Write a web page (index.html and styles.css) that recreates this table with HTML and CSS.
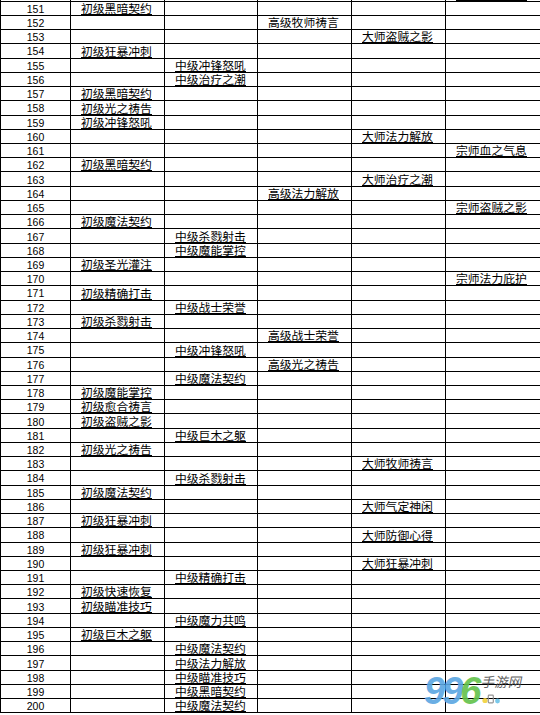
FILE: index.html
```html
<!DOCTYPE html>
<html lang="zh">
<head>
<meta charset="utf-8">
<title>技能表</title>
<link rel="stylesheet" href="styles.css">
</head>
<body>
<div class="page">
<div class="sheet">
<div class="c n"></div><div class="c"></div><div class="c"></div><div class="c"></div><div class="c"></div><div class="c"><span>宗师光之祷告</span></div>
<div class="c n">151</div><div class="c"><span>初级黑暗契约</span></div><div class="c"></div><div class="c"></div><div class="c"></div><div class="c"></div>
<div class="c n">152</div><div class="c"></div><div class="c"></div><div class="c"><span class="plain">高级牧师祷言</span></div><div class="c"></div><div class="c"></div>
<div class="c n">153</div><div class="c"></div><div class="c"></div><div class="c"></div><div class="c"><span>大师盗贼之影</span></div><div class="c"></div>
<div class="c n">154</div><div class="c"><span>初级狂暴冲刺</span></div><div class="c"></div><div class="c"></div><div class="c"></div><div class="c"></div>
<div class="c n">155</div><div class="c"></div><div class="c"><span>中级冲锋怒吼</span></div><div class="c"></div><div class="c"></div><div class="c"></div>
<div class="c n">156</div><div class="c"></div><div class="c"><span>中级治疗之潮</span></div><div class="c"></div><div class="c"></div><div class="c"></div>
<div class="c n">157</div><div class="c"><span>初级黑暗契约</span></div><div class="c"></div><div class="c"></div><div class="c"></div><div class="c"></div>
<div class="c n">158</div><div class="c"><span>初级光之祷告</span></div><div class="c"></div><div class="c"></div><div class="c"></div><div class="c"></div>
<div class="c n">159</div><div class="c"><span>初级冲锋怒吼</span></div><div class="c"></div><div class="c"></div><div class="c"></div><div class="c"></div>
<div class="c n">160</div><div class="c"></div><div class="c"></div><div class="c"></div><div class="c"><span>大师法力解放</span></div><div class="c"></div>
<div class="c n">161</div><div class="c"></div><div class="c"></div><div class="c"></div><div class="c"></div><div class="c"><span>宗师血之气息</span></div>
<div class="c n">162</div><div class="c"><span>初级黑暗契约</span></div><div class="c"></div><div class="c"></div><div class="c"></div><div class="c"></div>
<div class="c n">163</div><div class="c"></div><div class="c"></div><div class="c"></div><div class="c"><span>大师治疗之潮</span></div><div class="c"></div>
<div class="c n">164</div><div class="c"></div><div class="c"></div><div class="c"><span>高级法力解放</span></div><div class="c"></div><div class="c"></div>
<div class="c n">165</div><div class="c"></div><div class="c"></div><div class="c"></div><div class="c"></div><div class="c"><span>宗师盗贼之影</span></div>
<div class="c n">166</div><div class="c"><span>初级魔法契约</span></div><div class="c"></div><div class="c"></div><div class="c"></div><div class="c"></div>
<div class="c n">167</div><div class="c"></div><div class="c"><span>中级杀戮射击</span></div><div class="c"></div><div class="c"></div><div class="c"></div>
<div class="c n">168</div><div class="c"></div><div class="c"><span>中级魔能掌控</span></div><div class="c"></div><div class="c"></div><div class="c"></div>
<div class="c n">169</div><div class="c"><span>初级圣光灌注</span></div><div class="c"></div><div class="c"></div><div class="c"></div><div class="c"></div>
<div class="c n">170</div><div class="c"></div><div class="c"></div><div class="c"></div><div class="c"></div><div class="c"><span>宗师法力庇护</span></div>
<div class="c n">171</div><div class="c"><span>初级精确打击</span></div><div class="c"></div><div class="c"></div><div class="c"></div><div class="c"></div>
<div class="c n">172</div><div class="c"></div><div class="c"><span>中级战士荣誉</span></div><div class="c"></div><div class="c"></div><div class="c"></div>
<div class="c n">173</div><div class="c"><span>初级杀戮射击</span></div><div class="c"></div><div class="c"></div><div class="c"></div><div class="c"></div>
<div class="c n">174</div><div class="c"></div><div class="c"></div><div class="c"><span>高级战士荣誉</span></div><div class="c"></div><div class="c"></div>
<div class="c n">175</div><div class="c"></div><div class="c"><span>中级冲锋怒吼</span></div><div class="c"></div><div class="c"></div><div class="c"></div>
<div class="c n">176</div><div class="c"></div><div class="c"></div><div class="c"><span>高级光之祷告</span></div><div class="c"></div><div class="c"></div>
<div class="c n">177</div><div class="c"></div><div class="c"><span>中级魔法契约</span></div><div class="c"></div><div class="c"></div><div class="c"></div>
<div class="c n">178</div><div class="c"><span>初级魔能掌控</span></div><div class="c"></div><div class="c"></div><div class="c"></div><div class="c"></div>
<div class="c n">179</div><div class="c"><span>初级愈合祷言</span></div><div class="c"></div><div class="c"></div><div class="c"></div><div class="c"></div>
<div class="c n">180</div><div class="c"><span>初级盗贼之影</span></div><div class="c"></div><div class="c"></div><div class="c"></div><div class="c"></div>
<div class="c n">181</div><div class="c"></div><div class="c"><span>中级巨木之躯</span></div><div class="c"></div><div class="c"></div><div class="c"></div>
<div class="c n">182</div><div class="c"><span>初级光之祷告</span></div><div class="c"></div><div class="c"></div><div class="c"></div><div class="c"></div>
<div class="c n">183</div><div class="c"></div><div class="c"></div><div class="c"></div><div class="c"><span>大师牧师祷言</span></div><div class="c"></div>
<div class="c n">184</div><div class="c"></div><div class="c"><span>中级杀戮射击</span></div><div class="c"></div><div class="c"></div><div class="c"></div>
<div class="c n">185</div><div class="c"><span>初级魔法契约</span></div><div class="c"></div><div class="c"></div><div class="c"></div><div class="c"></div>
<div class="c n">186</div><div class="c"></div><div class="c"></div><div class="c"></div><div class="c"><span>大师气定神闲</span></div><div class="c"></div>
<div class="c n">187</div><div class="c"><span>初级狂暴冲刺</span></div><div class="c"></div><div class="c"></div><div class="c"></div><div class="c"></div>
<div class="c n">188</div><div class="c"></div><div class="c"></div><div class="c"></div><div class="c"><span>大师防御心得</span></div><div class="c"></div>
<div class="c n">189</div><div class="c"><span>初级狂暴冲刺</span></div><div class="c"></div><div class="c"></div><div class="c"></div><div class="c"></div>
<div class="c n">190</div><div class="c"></div><div class="c"></div><div class="c"></div><div class="c"><span>大师狂暴冲刺</span></div><div class="c"></div>
<div class="c n">191</div><div class="c"></div><div class="c"><span>中级精确打击</span></div><div class="c"></div><div class="c"></div><div class="c"></div>
<div class="c n">192</div><div class="c"><span>初级快速恢复</span></div><div class="c"></div><div class="c"></div><div class="c"></div><div class="c"></div>
<div class="c n">193</div><div class="c"><span>初级瞄准技巧</span></div><div class="c"></div><div class="c"></div><div class="c"></div><div class="c"></div>
<div class="c n">194</div><div class="c"></div><div class="c"><span>中级魔力共鸣</span></div><div class="c"></div><div class="c"></div><div class="c"></div>
<div class="c n">195</div><div class="c"><span>初级巨木之躯</span></div><div class="c"></div><div class="c"></div><div class="c"></div><div class="c"></div>
<div class="c n">196</div><div class="c"></div><div class="c"><span>中级魔法契约</span></div><div class="c"></div><div class="c"></div><div class="c"></div>
<div class="c n">197</div><div class="c"></div><div class="c"><span>中级法力解放</span></div><div class="c"></div><div class="c"></div><div class="c"></div>
<div class="c n">198</div><div class="c"></div><div class="c"><span>中级瞄准技巧</span></div><div class="c"></div><div class="c"></div><div class="c"></div>
<div class="c n">199</div><div class="c"></div><div class="c"><span>中级黑暗契约</span></div><div class="c"></div><div class="c"></div><div class="c"></div>
<div class="c n">200</div><div class="c"></div><div class="c"><span>中级魔法契约</span></div><div class="c"></div><div class="c"></div><div class="c"></div>
</div>
<div class="logo">
  <div class="logo-num"><span class="blue">99</span><span class="green">6</span></div>
  <div class="logo-side">
    <span class="logo-name">手游网</span>
    <svg class="logo-icons" width="20" height="10" viewBox="0 0 20 10">
      <circle cx="3" cy="6.5" r="2.6" fill="#f2d23a"/>
      <rect x="6.3" y="1.2" width="5" height="7.6" rx="0.8" fill="none" stroke="#8a8a8a" stroke-width="1.2"/>
      <circle cx="15.5" cy="7" r="2.4" fill="#6cc3e8"/>
    </svg>
  </div>
</div>
</div>
</body>
</html>
```

FILE: styles.css
```css
html, body {
  margin: 0;
  padding: 0;
  background: #fff;
}
.page {
  position: relative;
  width: 540px;
  height: 715px;
  overflow: hidden;
}
.sheet {
  display: grid;
  grid-template-columns: 70px 94px 93px 94px 94px 140px;
  grid-auto-rows: 14.24px;
  border-left: 1px solid #000;
  margin-top: -12.6px;
  width: max-content;
}
.c {
  box-sizing: border-box;
  border-right: 1px solid #000;
  border-bottom: 1px solid #000;
  display: flex;
  align-items: flex-end;
  padding-left: 10px;
  white-space: nowrap;
  font-family: "Noto Sans CJK SC", "Noto Sans", sans-serif;
  font-size: 11.8px;
  color: #000;
}
.c span {
  display: block;
  line-height: 12px;
  border-bottom: 1px solid #000;
}
.c span.plain {
  border-bottom-color: transparent;
}
.c.n {
  justify-content: center;
  align-items: center;
  padding: 1px 0 0 0;
  font-family: "Liberation Sans", Arial, sans-serif;
  font-size: 10.5px;
}
.logo {
  position: absolute;
  left: 424px;
  top: 672px;
  display: flex;
  align-items: flex-start;
  opacity: 0.9;
}
.logo-num {
  font-family: "Liberation Sans", Arial, sans-serif;
  font-weight: bold;
  font-style: italic;
  font-size: 38px;
  line-height: 38px;
  letter-spacing: -3px;
}
.blue { color: #5aa6e2; }
.green { color: #62c24a; }
.logo-side {
  display: flex;
  flex-direction: column;
  margin-left: 4px;
  margin-top: 2px;
}
.logo-name {
  font-family: "Noto Sans CJK SC", sans-serif;
  font-size: 13.5px;
  line-height: 14px;
  color: #505050;
  transform: skewX(-12deg);
}
.logo-icons {
  display: block;
  margin-top: 6px;
}
```
